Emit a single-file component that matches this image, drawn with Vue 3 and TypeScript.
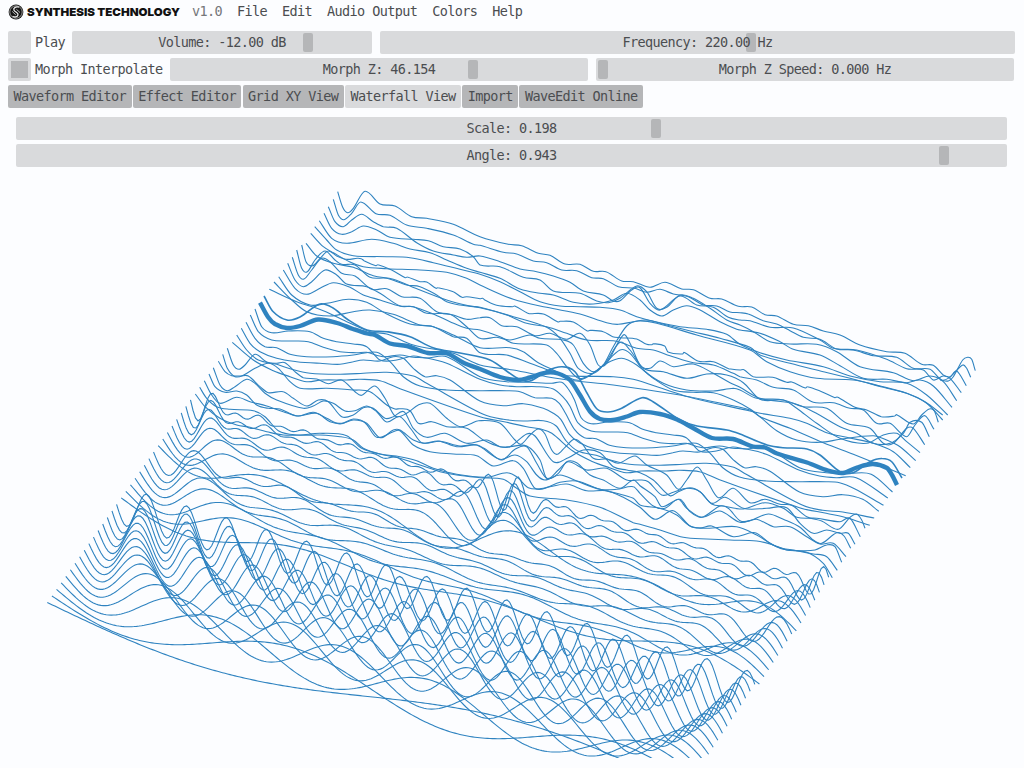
<script setup lang="ts">
interface Slider { label: string; knob: number }

const menu = ['File', 'Edit', 'Audio Output', 'Colors', 'Help']
const tabs = ['Waveform Editor', 'Effect Editor', 'Grid XY View', 'Waterfall View', 'Import', 'WaveEdit Online']
const activeTab = 'Waterfall View'

const volume: Slider = { label: 'Volume: -12.00 dB', knob: 231 }
const frequency: Slider = { label: 'Frequency: 220.00 Hz', knob: 365.5 }
const morphZ: Slider = { label: 'Morph Z: 46.154', knob: 298 }
const morphSpeed: Slider = { label: 'Morph Z Speed: 0.000 Hz', knob: 2 }
const view: Slider[] = [
  { label: 'Scale: 0.198', knob: 635 },
  { label: 'Angle: 0.943', knob: 923 },
]

const AMP = 19
const SAMPLES = 256

// Harmonics summed by each wave of the first half of the bank.
function harmonics(k: number): number[] {
  if (k < 16) return [k + 1]
  const n = (k % 8) + 1
  const last = Math.round(3 + (11 * (n - 1)) / 7)
  const out: number[] = []
  for (let h = n; h <= last; h++) out.push(k >= 24 ? 2 * h - 1 : h)
  return out
}

function additive(k: number): string {
  const hs = harmonics(k)
  const vals: number[] = []
  for (let i = 0; i < SAMPLES; i++) {
    vals.push(hs.reduce((s, h) => s + Math.sin((2 * Math.PI * h * i) / SAMPLES), 0))
  }
  const max = Math.max(...vals.map(Math.abs))
  return 'M' + vals.map((v, i) => {
    const x = 47.3 + 4.619 * k + (638.2 * i) / (SAMPLES - 1)
    const y = 602.5 - 6.54 * k + (187.2 * i) / (SAMPLES - 1) + (AMP * v) / max
    return x.toFixed(2) + ' ' + y.toFixed(2)
  }).join('L')
}

// Sampled waves: each letter switches the tile whose origin the following
// points are relative to; points are in thirds of a pixel.
const tiles: Record<string, [number, number]> = {
  a: [220, 180], b: [480, 220], c: [740, 300],
  d: [140, 340], e: [400, 420], f: [640, 430],
}

const sampled: string[] = [
  // 32-39
  'd 166,162 195,200 240,235 290,255 330,262 380,275 430,285 480,285 540,280 620,287 665,325 720,342 e 0,115 60,135 120,155 170,165 240,173 310,178 350,205 390,228 500,240 600,262 700,308 f 0,283 60,300 130,322 200,327 270,330 350,333 400,345 440,360 500,367 550,400 577,443',
  'd 179,142 200,175 230,200 270,208 340,212 375,230 415,272 470,285 540,285 600,290 640,300 670,325 720,342 e 0,110 50,122 100,145 170,163 260,172 320,158 350,170 385,203 430,205 480,187 530,183 600,208 650,220 700,235 f 0,225 60,235 110,255 150,288 200,295 290,290 350,315 410,350 470,362 520,372 560,380 592,421',
  'd 193,122 215,165 240,190 290,172 330,185 380,198 430,215 475,228 530,220 570,245 605,250 640,240 675,248 710,292 760,275 e 0,32 40,75 90,95 160,102 230,107 280,138 340,122 370,145 405,205 450,200 500,192 560,212 620,212 670,232 f 0,232 45,268 100,242 150,288 180,294 215,288 280,320 345,308 390,340 430,358 480,362 525,360 560,345 585,350 605,397',
  'd 207,102 225,140 255,157 290,153 320,165 350,195 385,205 420,207 470,228 520,217 560,235 600,252 640,237 680,250 720,293 760,270 e 0,30 40,60 75,70 120,64 180,78 230,75 300,118 345,105 380,125 410,165 435,180 480,165 530,183 600,208 650,208 700,200 f 0,190 40,228 75,235 115,208 140,235 185,262 240,243 300,277 350,268 400,290 450,290 500,320 540,342 580,340 618,380',
  'd 220,83 240,135 262,152 285,140 320,118 345,130 375,160 410,180 490,205 520,198 550,183 580,190 615,213 645,212 680,198 710,215 740,246 e 0,-10 35,30 65,68 115,63 170,80 230,75 260,90 305,120 345,88 380,80 410,130 440,175 475,160 500,125 530,128 570,165 610,180 660,205 700,180 f 0,167 45,200 65,230 120,208 150,245 185,262 240,228 265,235 300,272 330,272 385,252 430,268 480,292 520,330 545,340 590,308 612,318 632,355',
  'd 235,64 255,95 275,107 300,108 325,108 360,140 385,158 430,155 460,175 500,198 535,180 565,185 605,230 640,225 670,203 700,205 735,235 760,230 e 12,-25 40,25 80,52 135,40 200,70 260,60 300,80 330,80 380,78 420,120 440,175 475,150 505,125 560,150 620,145 680,180 f 0,150 25,155 65,195 100,187 140,175 180,185 215,220 255,202 310,235 380,235 440,233 480,280 520,310 560,300 600,310 625,310 645,343',
  'd 248,43 262,85 285,110 310,106 345,85 385,70 415,85 450,125 480,145 560,145 640,150 690,155 740,195 765,207 780,206 e 30,-28 55,10 95,5 140,20 200,25 250,60 300,80 330,80 380,42 405,48 460,125 505,113 550,90 600,98 640,140 680,150 f 0,128 40,150 90,197 115,185 150,173 180,185 215,222 250,228 310,237 375,218 430,235 470,262 530,265 600,275 630,265 661,320',
  'd 262,25 280,75 297,88 315,75 345,43 380,66 410,70 435,68 465,95 490,113 530,117 565,131 605,120 645,155 665,166 705,138 735,175 765,228 e 20,-20 55,-45 90,-50 140,-5 180,20 210,12 235,2 300,10 345,60 363,73 390,45 415,27 435,42 455,90 472,103 495,82 522,58 545,70 580,115 620,117 655,130 705,108 f 20,105 80,135 115,178 140,150 172,111 200,150 235,203 280,175 330,218 375,208 420,223 455,226 500,260 545,273 595,298 630,262 650,252 665,270 675,295',
  // 48-63
  'a 148,328 230,365 310,392 380,425 450,455 500,462 580,495 700,520 b 0,435 100,450 200,470 280,482 400,495 600,525 700,545 810,570 c 60,350 150,385 250,428 340,463 420,495 497,527',
  'a 162,306 210,355 260,395 330,408 400,395 450,390 520,403 600,435 640,440 700,470 740,475 b 0,398 80,405 150,430 210,452 260,467 400,470 460,478 560,510 640,535 810,573 c 60,340 150,355 200,370 260,398 320,412 400,430 460,455 511,503',
  'a 176,290 215,345 270,375 320,370 385,358 440,367 500,402 570,432 640,440 700,465 b 0,383 90,383 130,395 170,425 220,450 270,475 300,480 340,460 380,430 425,415 470,435 520,475 580,510 640,517 700,518 760,540 810,567 c 60,350 110,392 170,420 240,427 300,418 400,407 440,420 480,440 527,482',
  'a 190,270 225,325 260,343 300,325 340,308 390,322 430,345 480,360 540,378 580,380 640,402 690,425 740,445 b 0,330 60,350 100,370 200,375 230,400 260,440 295,475 330,465 370,435 420,390 450,400 490,450 550,490 620,510 700,513 760,505 c 0,270 50,295 130,300 170,325 230,370 300,415 380,430 430,405 470,400 500,425 540,458',
  'a 203,250 225,300 250,320 275,305 315,270 350,285 380,312 440,320 480,340 540,378 580,380 620,400 690,403 740,440 b 0,355 50,352 90,360 150,345 180,355 250,360 280,375 310,430 340,455 375,430 420,367 450,390 490,445 550,455 620,475 680,462 740,465 790,488 c 0,258 60,298 130,300 190,320 260,325 320,370 390,385 430,430 460,430 500,385 520,385 554,434',
  'a 217,232 235,285 252,297 275,270 305,235 330,245 365,280 405,288 455,328 500,326 545,350 600,355 650,395 700,405 740,418 b 0,293 30,293 65,317 110,320 165,347 210,340 260,358 300,340 330,375 355,435 380,430 430,345 450,370 480,435 510,445 540,423 580,440 640,432 700,460 750,488 c 0,262 60,295 160,310 220,335 300,380 350,400 400,430 450,430 490,400 510,367 545,367 568,410',
  'a 230,210 245,265 262,275 285,240 315,213 345,240 365,253 405,255 450,292 500,295 560,315 600,320 650,345 680,365 720,375 b 0,263 80,285 140,310 200,320 260,340 320,360 400,362 430,370 470,385 520,390 570,407 640,428 700,435 760,460 c 0,230 50,240 100,262 160,270 220,307 280,308 330,325 370,330 410,370 450,370 500,410 525,375 555,347 582,388',
  'a 245,195 258,245 278,257 300,235 325,213 350,228 378,238 412,235 424,236 432,242 468,257 474,254 515,270 556,293 562,291 600,305 620,306 648,325 654,323 700,335 726,352 740,350 780,356 b 8,235 16,241 50,256 98,260 104,258 142,279 148,281 190,282 234,306 240,304 280,306 322,333 330,331 370,335 398,350 422,353 470,357 500,373 516,374 520,371 554,378 564,396 608,402 612,397 656,424 700,425 746,446 752,447 c 0,210 12,209 40,230 98,232 140,247 155,246 196,264 202,260 240,273 285,293 292,291 345,322 380,330 424,350 464,348 470,344 520,372 545,345 568,327 583,333 595,367',
  'a 258,190 290,228 340,250 400,262 460,287 520,298 600,330 680,360 750,378 b 0,262 100,290 200,322 240,355 270,400 295,445 340,460 370,435 400,380 440,318 475,303 530,310 650,345 810,390 c 80,185 150,215 230,235 340,240 420,258 500,280 560,310 608,360',
  'a 272,160 310,200 340,218 390,246 430,260 500,266 600,270 680,277 740,295 b 0,195 100,238 200,262 300,282 380,308 415,313 460,305 500,300 560,315 640,335 720,355 810,382 c 60,165 150,190 250,215 350,240 430,262 500,280 555,305 608,345',
  'a 284,140 320,180 350,210 400,227 500,230 570,233 640,248 720,268 b 0,163 60,185 120,215 180,245 240,258 300,260 360,262 420,270 470,290 530,306 600,320 680,328 740,343 c 0,133 60,158 140,180 250,200 330,228 420,245 500,250 560,285 623,345',
  'a 298,122 335,175 380,190 455,178 520,190 570,207 630,218 680,240 740,265 b 0,157 60,175 120,207 180,220 220,225 280,247 340,252 400,240 440,220 480,240 510,270 545,288 580,270 620,257 660,270 720,305 770,328 c 0,90 60,100 120,125 160,148 240,165 300,197 370,235 440,238 500,248 540,240 580,258 636,322',
  'a 312,100 335,145 365,163 395,155 430,138 470,150 510,172 580,178 625,182 670,200 720,207 760,230 b 0,135 60,140 130,172 180,180 220,213 300,220 350,243 385,248 420,235 470,198 500,215 530,265 560,262 600,225 640,235 690,265 740,300 c 0,75 40,95 90,125 150,132 230,133 290,155 360,200 460,218 520,242 570,228 610,245 650,302',
  'a 325,80 345,125 370,140 395,120 425,103 460,125 490,140 530,145 590,188 640,213 700,225 740,232 b 0,108 60,125 120,147 170,155 220,168 270,187 310,213 370,225 400,243 420,242 455,210 480,203 510,250 540,270 600,228 650,255 700,262 745,292 c 0,60 30,62 90,82 160,84 240,120 280,145 350,150 440,178 500,206 550,210 580,240 610,228 630,235 664,278',
  'a 340,58 355,105 372,119 395,100 422,66 468,101 510,106 560,135 620,145 700,165 760,193 b 0,76 70,97 110,102 160,123 200,128 245,150 290,152 335,173 370,176 415,200 465,205 500,217 540,208 580,222 625,230 670,255 710,258 750,276 c 0,38 25,42 70,62 110,72 150,92 190,112 240,118 290,147 340,150 400,167 470,172 520,205 570,208 605,240 630,232 650,213 679,257',
  'a 353,35 368,82 383,98 400,85 435,34 480,72 525,78 575,110 620,115 700,133 b 0,50 85,73 125,77 175,100 210,106 255,132 300,133 340,154 378,155 425,183 460,185 510,202 555,187 605,207 640,209 690,235 725,237 c -5,19 35,21 75,44 110,48 160,73 205,77 250,93 300,105 360,135 440,155 495,160 545,193 580,196 610,225 630,230 668,195 680,205 692,232',
  'c 600,240 625,243 640,230 668,180 683,172 695,178 706,212',
]

// Waves holding only even harmonics: one half is stored, the other repeats it.
const halves: string[] = [
  'd 277,7 340,60 400,92 450,110 500,125 545,120 620,120 660,118 720,122 780,146 b 0,590 80,607 140,620 185,628',
  'a 50,465 80,510 115,540 170,553 215,568 270,580 350,583 430,580 500,577 580,588 d 860,130 b 10,583 70,598 130,603 190,602',
  'a 64,445 90,490 120,515 170,535 230,545 300,550 360,553 400,545 430,540 480,543 520,530 550,535 580,565 615,590 650,587 690,600 b 0,543 70,557 130,551 190,565 220,580',
  'a 78,427 105,475 135,500 170,503 210,523 260,530 340,530 400,525 470,517 510,545 550,590 600,618 680,630 b 0,512 80,512 120,515 165,533 215,535 238,550',
  'a 91,405 115,455 155,480 210,483 265,485 310,502 360,515 410,518 440,517 490,530 540,525 580,532 620,534 680,550 b 0,478 60,495 110,500 170,500 220,507 248,530',
  'a 105,387 125,440 155,458 205,453 270,455 310,475 350,485 400,492 440,500 480,540 530,540 580,528 620,534 680,530 b 0,470 80,485 150,487 215,490 245,487 265,507',
]

const WAVE_47 = '264,296 273,311.5 287,320 300,317 320,304 333,308 347,319 367,330 387,331.7 410,336.7 433,347.7 460,353 490,360 517,378 530,381 547,370.7 562,366.7 575,371.7 587,393 597,409 608,412 620,409 642,397.7 653,401.7 680,420 697,426 727,430 740,434 767,445 783,447.7 807,449 820,455 840,471.7 853,472.7 870,461.7 882,458.5 892,462 902,478'
const MORPHED = '260,302.7 268,317 275,324 287,328 300,326 318,319.5 337,323 353,329 367,333.5 375,335 390,343.5 407,346 428,353 447,353.5 463,362.5 480,369 500,377 518,380 530,377.5 547,372.5 558,373.5 570,380 580,395 590,411.5 600,419 613,420 627,416.5 640,412 660,414 677,419.5 693,428 712,438 733,439 753,446.5 765,447.5 777,453.5 807,462.5 828,470.5 843,473 857,467.5 873,464 887,468 892,475 897,485'

type Point = [number, number]

function plain(s: string): Point[] {
  return s.split(' ').map(t => t.split(',').map(Number) as Point)
}

function tiled(s: string): Point[] {
  const out: Point[] = []
  let origin: [number, number] = [0, 0]
  for (const t of s.split(' ')) {
    if (t in tiles) { origin = tiles[t]; continue }
    const [x, y] = t.split(',').map(Number)
    const px = origin[0] + x / 3
    if (!out.length || px > out[out.length - 1][0] + 1) out.push([px, origin[1] + y / 3])
  }
  return out
}

function doubled(s: string): Point[] {
  const first = tiled(s)
  const end: Point = [first[0][0] + 637.5, first[0][1] + 183]
  const second = first
    .map(([x, y]): Point => [x + 319.5, y + 91])
    .filter(([x]) => x < end[0] - 15)
  return [...first, ...second, end]
}

function smooth(p: Point[]): string {
  let d = `M${p[0][0].toFixed(1)} ${p[0][1].toFixed(1)}`
  for (let i = 0; i < p.length - 1; i++) {
    const a = p[i - 1] ?? p[i], b = p[i], c = p[i + 1], e = p[i + 2] ?? c
    const w = (c[0] - b[0]) / 3
    const mb = (c[1] - a[1]) / (c[0] - a[0] || 1)
    const mc = (e[1] - b[1]) / (e[0] - b[0] || 1)
    d += `C${(b[0] + w).toFixed(1)} ${(b[1] + mb * w).toFixed(1)} ${(c[0] - w).toFixed(1)} ${(c[1] - mc * w).toFixed(1)} ${c[0].toFixed(1)} ${c[1].toFixed(1)}`
  }
  return d
}

const lines = [
  ...Array.from({ length: 32 }, (_, k) => ({ width: 1.1, d: additive(k) })),
  ...sampled.map(s => ({ width: 1.1, d: smooth(tiled(s)) })),
  ...halves.map(s => ({ width: 1.1, d: smooth(doubled(s)) })),
  { width: 1.6, d: smooth(plain(WAVE_47)) },
  { width: 4.4, d: smooth(plain(MORPHED)) },
]
</script>

<template>
  <div class="app">
    <header class="menubar">
      <svg class="logo" width="174" height="18" viewBox="0 0 174 18">
        <circle cx="8" cy="9" r="7.4" fill="#141414" />
        <circle cx="8" cy="9" r="6.2" fill="none" stroke="#cfcfcf" stroke-width=".7" />
        <path d="M11 4.2C7.5 3.2 5 5.3 6 7.2S10.6 9.6 10 11.9 6.5 14.5 4.6 13.3" fill="none" stroke="#e8e8e8" stroke-width="1.3" />
        <path d="M8.4 6.3L12 9.5M4.2 8.4L7.8 11.9" stroke="#bbb" stroke-width="1" />
        <text x="19" y="13" textLength="153" lengthAdjust="spacingAndGlyphs">SYNTHESIS TECHNOLOGY</text>
      </svg>
      <span class="version">v1.0</span>
      <span v-for="m in menu" :key="m" class="item">{{ m }}</span>
    </header>

    <div class="row">
      <span class="check"></span><span class="name play">Play</span>
      <div class="slider vol"><i :style="{ left: volume.knob + 'px' }"></i><b>{{ volume.label }}</b></div>
      <div class="slider freq"><i :style="{ left: frequency.knob + 'px' }"></i><b>{{ frequency.label }}</b></div>
    </div>
    <div class="row">
      <span class="check on"></span><span class="name morph">Morph Interpolate</span>
      <div class="slider mz"><i :style="{ left: morphZ.knob + 'px' }"></i><b>{{ morphZ.label }}</b></div>
      <div class="slider mz"><i :style="{ left: morphSpeed.knob + 'px' }"></i><b>{{ morphSpeed.label }}</b></div>
    </div>
    <nav class="tabs">
      <span v-for="t in tabs" :key="t" :class="['tab', { active: t === activeTab }]">{{ t }}</span>
    </nav>
    <div class="view">
      <div v-for="s in view" :key="s.label" class="slider wide"><i :style="{ left: s.knob + 'px' }"></i><b>{{ s.label }}</b></div>
    </div>
    <svg class="plot" width="1024" height="587" viewBox="0 171 1024 587">
      <path v-for="(l, i) in lines" :key="i" :d="l.d" :stroke-width="l.width" />
    </svg>
  </div>
</template>

<style>
body { background: #fcfdff; overflow: hidden; }
</style>
<style scoped>
.app { width: 1024px; height: 768px; overflow: hidden; display: flex; flex-direction: column; background: #fcfdff; color: #4b4d50; font: 13.5px/23px "DejaVu Sans Mono", "Liberation Mono", monospace; letter-spacing: -0.62px; white-space: pre; }
.menubar { height: 31px; flex: none; display: flex; align-items: flex-start; padding-left: 7.5px; }
.logo { margin: 3px 10.5px 0 0; flex: none; }
.logo text { font: 900 11px Inter, sans-serif; fill: #111; letter-spacing: 0; }
.version { margin-right: 15px; color: #75777a; }
.item { margin-right: 15px; }
.row { display: flex; height: 23px; margin-bottom: 4px; padding-left: 8px; flex: none; }
.check { width: 23px; height: 23px; box-sizing: border-box; border-radius: 2px; background: #d9dadc; flex: none; }
.check.on { border: 3px solid #d9dadc; background: #b5b6b8; }
.name { padding-left: 4px; flex: none; }
.play { width: 37px; }
.morph { width: 135px; }
.slider { position: relative; height: 23px; background: #d9dadc; border-radius: 2px; text-align: center; flex: none; margin-right: 8px; }
.slider i { position: absolute; top: 2px; width: 10px; height: 19px; border-radius: 2px; background: #b5b6b8; }
.slider b { position: relative; font-weight: 400; }
.vol { width: 300px; }
.freq { width: 635px; }
.mz { width: 418px; }
.tabs { display: flex; gap: 1.2px; padding-left: 8px; height: 23px; flex: none; }
.tab { background: #b5b6b8; border-radius: 2px; padding: 0 5.5px; }
.tab.active { background: #d9dadc; }
.view { padding: 9px 0 0 16px; flex: none; height: 54px; }
.wide { width: 991px; margin-bottom: 4px; }
.plot { display: block; flex: none; }
.plot path { fill: none; stroke: #2f83c0; }
</style>
